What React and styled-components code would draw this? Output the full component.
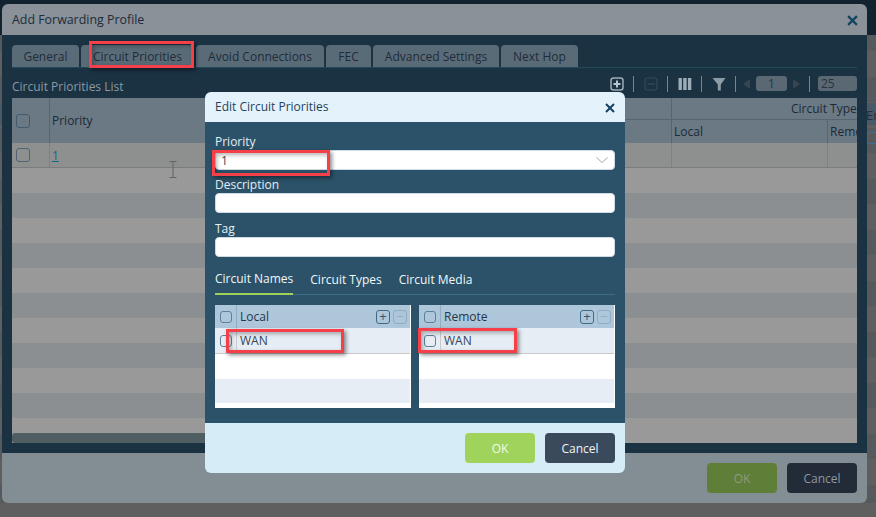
import React from 'react';
import styled, { createGlobalStyle } from 'styled-components';

const GlobalStyle = createGlobalStyle`
  html, body { margin: 0; padding: 0; height: 100%; overflow: hidden; }
  body { font-family: "Open Sans", "Liberation Sans", sans-serif; font-size: 12px; }
  * { box-sizing: border-box; }
`;

const Page = styled.div`
  position: relative;
  width: 876px;
  height: 517px;
  overflow: hidden;
  padding: 4px 9px 14px 2px;
  display: flex;
  background:
    linear-gradient(#12222e 0 35px, transparent 35px),
    linear-gradient(transparent 103px, #4a5966 103px 125px, transparent 125px),
    linear-gradient(transparent 503px, #5f5f5f 503px),
    repeating-linear-gradient(#5f5f5f 0 26px, #565a5d 26px 51px);
`;

const BehindText = styled.span`
  position: absolute;
  left: 866px;
  top: 106px;
  font-size: 13px;
  color: #25303a;
`;

const BehindCheck = styled.span`
  position: absolute;
  left: 867px;
  top: 132px;
  width: 12px;
  height: 12px;
  border: 1px solid #3d6f93;
  border-radius: 2px;
`;

const Modal = styled.div`
  position: relative;
  flex: 1;
  display: flex;
  flex-direction: column;
  border-radius: 6px;
  overflow: hidden;
`;

const ModalHeader = styled.div`
  height: 31px;
  flex: none;
  display: flex;
  align-items: center;
  justify-content: space-between;
  padding: 0 9px 1px 10px;
  background: #8a9199;
  color: #1c2c3a;
  font-size: 12.4px;
`;

const CloseButton = styled.svg`
  width: ${(p) => p.$size}px;
  height: ${(p) => p.$size}px;
  margin-top: ${(p) => p.$top}px;
  stroke: #12425f;
  stroke-width: 2;
  fill: none;
`;

const ModalBody = styled.div`
  flex: 1;
  min-height: 0;
  display: flex;
  flex-direction: column;
  padding: 10px;
  background: #1a3242;
`;

const ModalFooter = styled.div`
  height: 50px;
  flex: none;
  display: flex;
  justify-content: flex-end;
  align-items: center;
  gap: 10px;
  padding: 0 10px;
  background: ${(p) => (p.$inner ? '#d6ecf7' : '#828e93')};
`;

const TabBar = styled.div`
  display: flex;
  gap: 2px;
  height: 23px;
  flex: none;
  border-bottom: 1px solid #214a5c;
`;

const Tab = styled.div`
  width: ${(p) => p.$w}px;
  height: 22px;
  display: flex;
  align-items: center;
  justify-content: center;
  background: #5a6b78;
  border-radius: 4px 4px 0 0;
  color: #1f2b3a;
  font-size: 12px;
`;

const ListBar = styled.div`
  height: 30px;
  flex: none;
  display: flex;
  align-items: center;
  justify-content: space-between;
  color: #8c99a3;
  font-size: 12px;
  padding-top: 4px;
`;

const ListTitle = styled.span`
  margin-top: 2px;
`;

const Toolbar = styled.div`
  display: flex;
  align-items: center;
  height: 18px;
  margin-bottom: 3px;
`;

const ToolSep = styled.span`
  width: 1px;
  height: 16px;
  background: #77858e;
  margin: 0 ${(p) => p.$r ?? 10}px 0 9px;
`;

const ToolIcon = styled.svg`
  width: 14px;
  height: 14px;
  flex: none;
  display: block;
`;

const PageInput = styled.span`
  width: ${(p) => p.$w}px;
  height: 15px;
  display: flex;
  align-items: center;
  justify-content: ${(p) => (p.$left ? 'flex-start' : 'center')};
  padding: 0 ${(p) => (p.$left ? 3 : 0)}px;
  margin-left: ${(p) => (p.$left ? 1 : 0)}px;
  background: #5a6873;
  border-radius: 3px;
  color: #27343f;
  font-size: 12px;
`;

const Arrow = styled.span`
  width: 0;
  height: 0;
  border-top: 5px solid transparent;
  border-bottom: 5px solid transparent;
  ${(p) => (p.$right ? 'border-left: 7px solid #36454f;' : 'border-right: 7px solid #36454f;')}
  margin: ${(p) => (p.$right ? '0 0 0 6px' : '0 6px 0 0')};
`;

const Table = styled.div`
  position: relative;
  flex: 1;
  min-height: 0;
  overflow: hidden;
`;

const HeadGrid = styled.div`
  display: grid;
  grid-template-columns: 37px 200px 422px 156px 30px;
  grid-template-rows: 22px 23px;
  height: 45px;
  background: #6b7985;
  color: #1c2a35;
  font-size: 12px;
`;

const HeadCell = styled.div`
  display: flex;
  align-items: center;
  white-space: nowrap;
  overflow: hidden;
  padding-left: ${(p) => p.$pad || 0}px;
  ${(p) => p.$span && `grid-row: span ${p.$span};`}
  ${(p) => p.$cols && `grid-column: span ${p.$cols};`}
  ${(p) => p.$line && 'border-left: 1px solid #566570;'}
  ${(p) => p.$under && 'border-bottom: 1px solid #566570;'}
`;

const DataRow = styled.div`
  display: grid;
  grid-template-columns: 37px 200px 422px 156px 30px;
  height: 25px;
  background: #8e9090;
  border-bottom: 1px solid #7c7c7c;
`;

const DataCell = styled.div`
  display: flex;
  align-items: center;
  padding-left: ${(p) => p.$pad || 0}px;
  ${(p) => p.$line && 'border-left: 1px solid #7f8080;'}
`;

const LinkText = styled.span`
  color: #17628c;
  text-decoration: underline;
  font-size: 12px;
`;

const Stripe = styled.div`
  height: 25px;
  background: ${(p) => (p.$odd ? '#8b8f92' : '#999999')};
`;

const ScrollBar = styled.div`
  position: absolute;
  left: 0;
  bottom: 0;
  width: 610px;
  height: 10px;
  border-radius: 3px 0 0 3px;
  background: #4f5e63;
`;

const Check = styled.span`
  display: block;
  width: ${(p) => p.$size || 14}px;
  height: ${(p) => p.$size || 14}px;
  flex: none;
  border: 1px solid ${(p) => p.$color || '#3f5a6e'};
  border-radius: 3px;
`;

const Dialog = styled.div`
  position: absolute;
  left: 205px;
  top: 92px;
  width: 420px;
  height: 381px;
  display: flex;
  flex-direction: column;
  border-radius: 6px;
  overflow: hidden;
`;

const DialogHeader = styled.div`
  height: 30px;
  flex: none;
  display: flex;
  align-items: center;
  justify-content: space-between;
  padding: 0 10px 2px;
  background: #e4f3fb;
  color: #1f4258;
  font-size: 12px;
`;

const DialogBody = styled.div`
  flex: 1;
  min-height: 0;
  padding: 11px 10px 0;
  background: #2b5269;
  display: flex;
  flex-direction: column;
`;

const FieldLabel = styled.label`
  display: block;
  height: 17px;
  line-height: 17px;
  color: #e6eef3;
  font-size: 12px;
`;

const Field = styled.div`
  margin-bottom: ${(p) => p.$mb || 6}px;
`;

const Input = styled.div`
  height: 20px;
  display: flex;
  align-items: center;
  justify-content: space-between;
  padding: 0 6px 0 5px;
  background: #fff;
  border: 1px solid #cfdbe3;
  border-radius: 4px;
  color: #3a4d5c;
  font-size: 12px;
`;

const InnerTabs = styled.div`
  display: flex;
  gap: 17px;
  height: 27px;
  margin-top: 5px;
  flex: none;
  border-bottom: 1px solid #3d6c84;
`;

const InnerTab = styled.div`
  height: 27px;
  display: flex;
  align-items: center;
  padding-bottom: 5px;
  color: #f2f7fa;
  font-size: 12px;
  ${(p) => p.$active && 'border-bottom: 2px solid #9fd15a;'}
`;

const Panels = styled.div`
  display: flex;
  gap: 8px;
  margin-top: 10px;
`;

const Panel = styled.div`
  flex: 1;
  height: 103px;
  background: #fff;
  padding-right: 1px;
`;

const PanelHead = styled.div`
  height: 23px;
  display: flex;
  align-items: center;
  background: #adc6d9;
  color: #25384a;
  font-size: 12px;
`;

const CheckCol = styled.div`
  width: 22px;
  flex: none;
  height: 100%;
  display: flex;
  align-items: center;
  justify-content: center;
  border-right: 1px solid ${(p) => p.$line || '#93acc0'};
`;

const PanelName = styled.span`
  flex: 1;
  padding-left: 3px;
`;

const MiniButton = styled.span`
  width: 14px;
  height: 14px;
  margin-right: 3px;
  display: flex;
  align-items: center;
  justify-content: center;
  border: 1px solid ${(p) => (p.$off ? '#92adc0' : '#3f6a85')};
  border-radius: 3px;
  color: ${(p) => (p.$off ? '#92adc0' : '#2d5a78')};
  font-size: 13px;
  line-height: 1;
`;

const PanelRow = styled.div`
  height: ${(p) => p.$h || 25}px;
  display: flex;
  align-items: center;
  background: ${(p) => (p.$tint ? '#e6edf4' : '#fff')};
  color: #33465a;
  font-size: 12px;
  ${(p) => p.$line && 'border-bottom: 1px solid #c9c9c9;'}
`;

const Button = styled.div`
  width: 70px;
  height: 30px;
  display: flex;
  align-items: center;
  justify-content: center;
  border-radius: 4px;
  font-size: 12px;
  background: ${(p) => p.$bg};
  color: ${(p) => p.$fg};
`;

const Highlight = styled.div`
  position: absolute;
  left: ${(p) => p.$x}px;
  top: ${(p) => p.$y}px;
  width: ${(p) => p.$w}px;
  height: ${(p) => p.$h}px;
  border: 3px solid #f5404a;
  box-shadow: 2px 2px 4px rgba(0, 0, 0, 0.45), inset 2px 2px 4px rgba(0, 0, 0, 0.3);
`;

const Cursor = styled.svg`
  position: absolute;
  left: 169px;
  top: 161px;
  width: 8px;
  height: 18px;
  stroke: #5f6466;
  fill: none;
`;

const CloseIcon = ({ size, top }) => (
  <CloseButton $size={size} $top={top} viewBox="0 0 10 10">
    <path d="M1 1 L9 9 M9 1 L1 9" />
  </CloseButton>
);

const tabs = [
  ['General', 67],
  ['Circuit Priorities', 113],
  ['Avoid Connections', 128],
  ['FEC', 45],
  ['Advanced Settings', 126],
  ['Next Hop', 77],
];

const TablePanel = ({ name }) => (
  <Panel>
    <PanelHead>
      <CheckCol>
        <Check $size={12} $color="#5d829c" />
      </CheckCol>
      <PanelName>{name}</PanelName>
      <MiniButton>+</MiniButton>
      <MiniButton $off>−</MiniButton>
    </PanelHead>
    <PanelRow $tint $line $h={26}>
      <CheckCol $line="#c9c9c9">
        <Check $size={12} $color="#5d829c" />
      </CheckCol>
      <PanelName>WAN</PanelName>
    </PanelRow>
    <PanelRow />
    <PanelRow $tint $h={24} />
  </Panel>
);

export default function App() {
  return (
    <Page>
      <GlobalStyle />
      <BehindText>En</BehindText>
      <BehindCheck />
      <Modal>
        <ModalHeader>
          Add Forwarding Profile
          <CloseIcon size={11} top={3} />
        </ModalHeader>
        <ModalBody>
          <TabBar>
            {tabs.map(([label, w]) => (
              <Tab key={label} $w={w}>{label}</Tab>
            ))}
          </TabBar>
          <ListBar>
            <ListTitle>Circuit Priorities List</ListTitle>
            <Toolbar>
              <ToolIcon viewBox="0 0 14 14">
                <rect x="1" y="1" width="12" height="12" rx="2.5" fill="none" stroke="#9fadb6" strokeWidth="1.5" />
                <path d="M3.5 7h7M7 3.5v7" stroke="#b9c5cc" strokeWidth="2" />
              </ToolIcon>
              <ToolSep />
              <ToolIcon viewBox="0 0 14 14">
                <rect x="1" y="1" width="12" height="12" rx="2.5" fill="none" stroke="#2d4b5d" strokeWidth="1.2" />
                <path d="M3.5 7h7" stroke="#2d4b5d" strokeWidth="1.5" />
              </ToolIcon>
              <ToolSep />
              <ToolIcon viewBox="0 0 14 14">
                <path d="M0.5 1h3.4v12h-3.4zM5.2 1h3.4v12h-3.4zM9.9 1h3.4v12h-3.4z" fill="#9fadb6" />
              </ToolIcon>
              <ToolSep />
              <ToolIcon viewBox="0 0 14 14">
                <path d="M0.5 1h13L8.8 7.5V13.5H5.8V7.5z" fill="#8d9ba4" />
              </ToolIcon>
              <ToolSep $r={7} />
              <Arrow />
              <PageInput $w={31}>1</PageInput>
              <Arrow $right />
              <ToolSep $r={7} />
              <PageInput $w={39} $left>25</PageInput>
            </Toolbar>
          </ListBar>
          <Table>
            <HeadGrid>
              <HeadCell $span={2} $pad={4}><Check /></HeadCell>
              <HeadCell $span={2} $line $pad={2}>Priority</HeadCell>
              <HeadCell $under />
              <HeadCell $cols={2} $line $under $pad={119}>Circuit Types</HeadCell>
              <HeadCell />
              <HeadCell $line $pad={2}>Local</HeadCell>
              <HeadCell $line $pad={2}>Remote</HeadCell>
            </HeadGrid>
            <DataRow>
              <DataCell $pad={4}><Check $color="#4f6373" /></DataCell>
              <DataCell $line $pad={2}><LinkText>1</LinkText></DataCell>
              <DataCell />
              <DataCell $line />
              <DataCell $line />
            </DataRow>
            {Array.from({ length: 11 }, (_, i) => (
              <Stripe key={i} $odd={i % 2 === 1} />
            ))}
            <ScrollBar />
          </Table>
        </ModalBody>
        <ModalFooter>
          <Button $bg="#5f7e37" $fg="#8e9a80">OK</Button>
          <Button $bg="#232b38" $fg="#8f96a0">Cancel</Button>
        </ModalFooter>
      </Modal>

      <Cursor viewBox="0 0 8 18">
        <path d="M0.5 0.5h7M4 0.5v16M0.5 16.5h7" />
      </Cursor>

      <Dialog>
        <DialogHeader>
          Edit Circuit Priorities
          <CloseIcon size={10} top={4} />
        </DialogHeader>
        <DialogBody>
          <Field>
            <FieldLabel>Priority</FieldLabel>
            <Input>
              1
              <svg width="12" height="6" viewBox="0 0 12 6">
                <path d="M0.5 0.5 L6 5.5 L11.5 0.5" fill="none" stroke="#a3a9ad" />
              </svg>
            </Input>
          </Field>
          <Field $mb={7}>
            <FieldLabel>Description</FieldLabel>
            <Input />
          </Field>
          <Field>
            <FieldLabel>Tag</FieldLabel>
            <Input />
          </Field>
          <InnerTabs>
            <InnerTab $active>Circuit Names</InnerTab>
            <InnerTab>Circuit Types</InnerTab>
            <InnerTab>Circuit Media</InnerTab>
          </InnerTabs>
          <Panels>
            <TablePanel name="Local" />
            <TablePanel name="Remote" />
          </Panels>
        </DialogBody>
        <ModalFooter $inner>
          <Button $bg="#a0d35c" $fg="#f3f9ea">OK</Button>
          <Button $bg="#3a4a5c" $fg="#f1f4f7">Cancel</Button>
        </ModalFooter>
      </Dialog>

      <Highlight $x={89} $y={41} $w={105} $h={27} />
      <Highlight $x={212} $y={150} $w={118} $h={26} />
      <Highlight $x={226} $y={329} $w={118} $h={24} />
      <Highlight $x={418} $y={328} $w={99} $h={25} />
    </Page>
  );
}
